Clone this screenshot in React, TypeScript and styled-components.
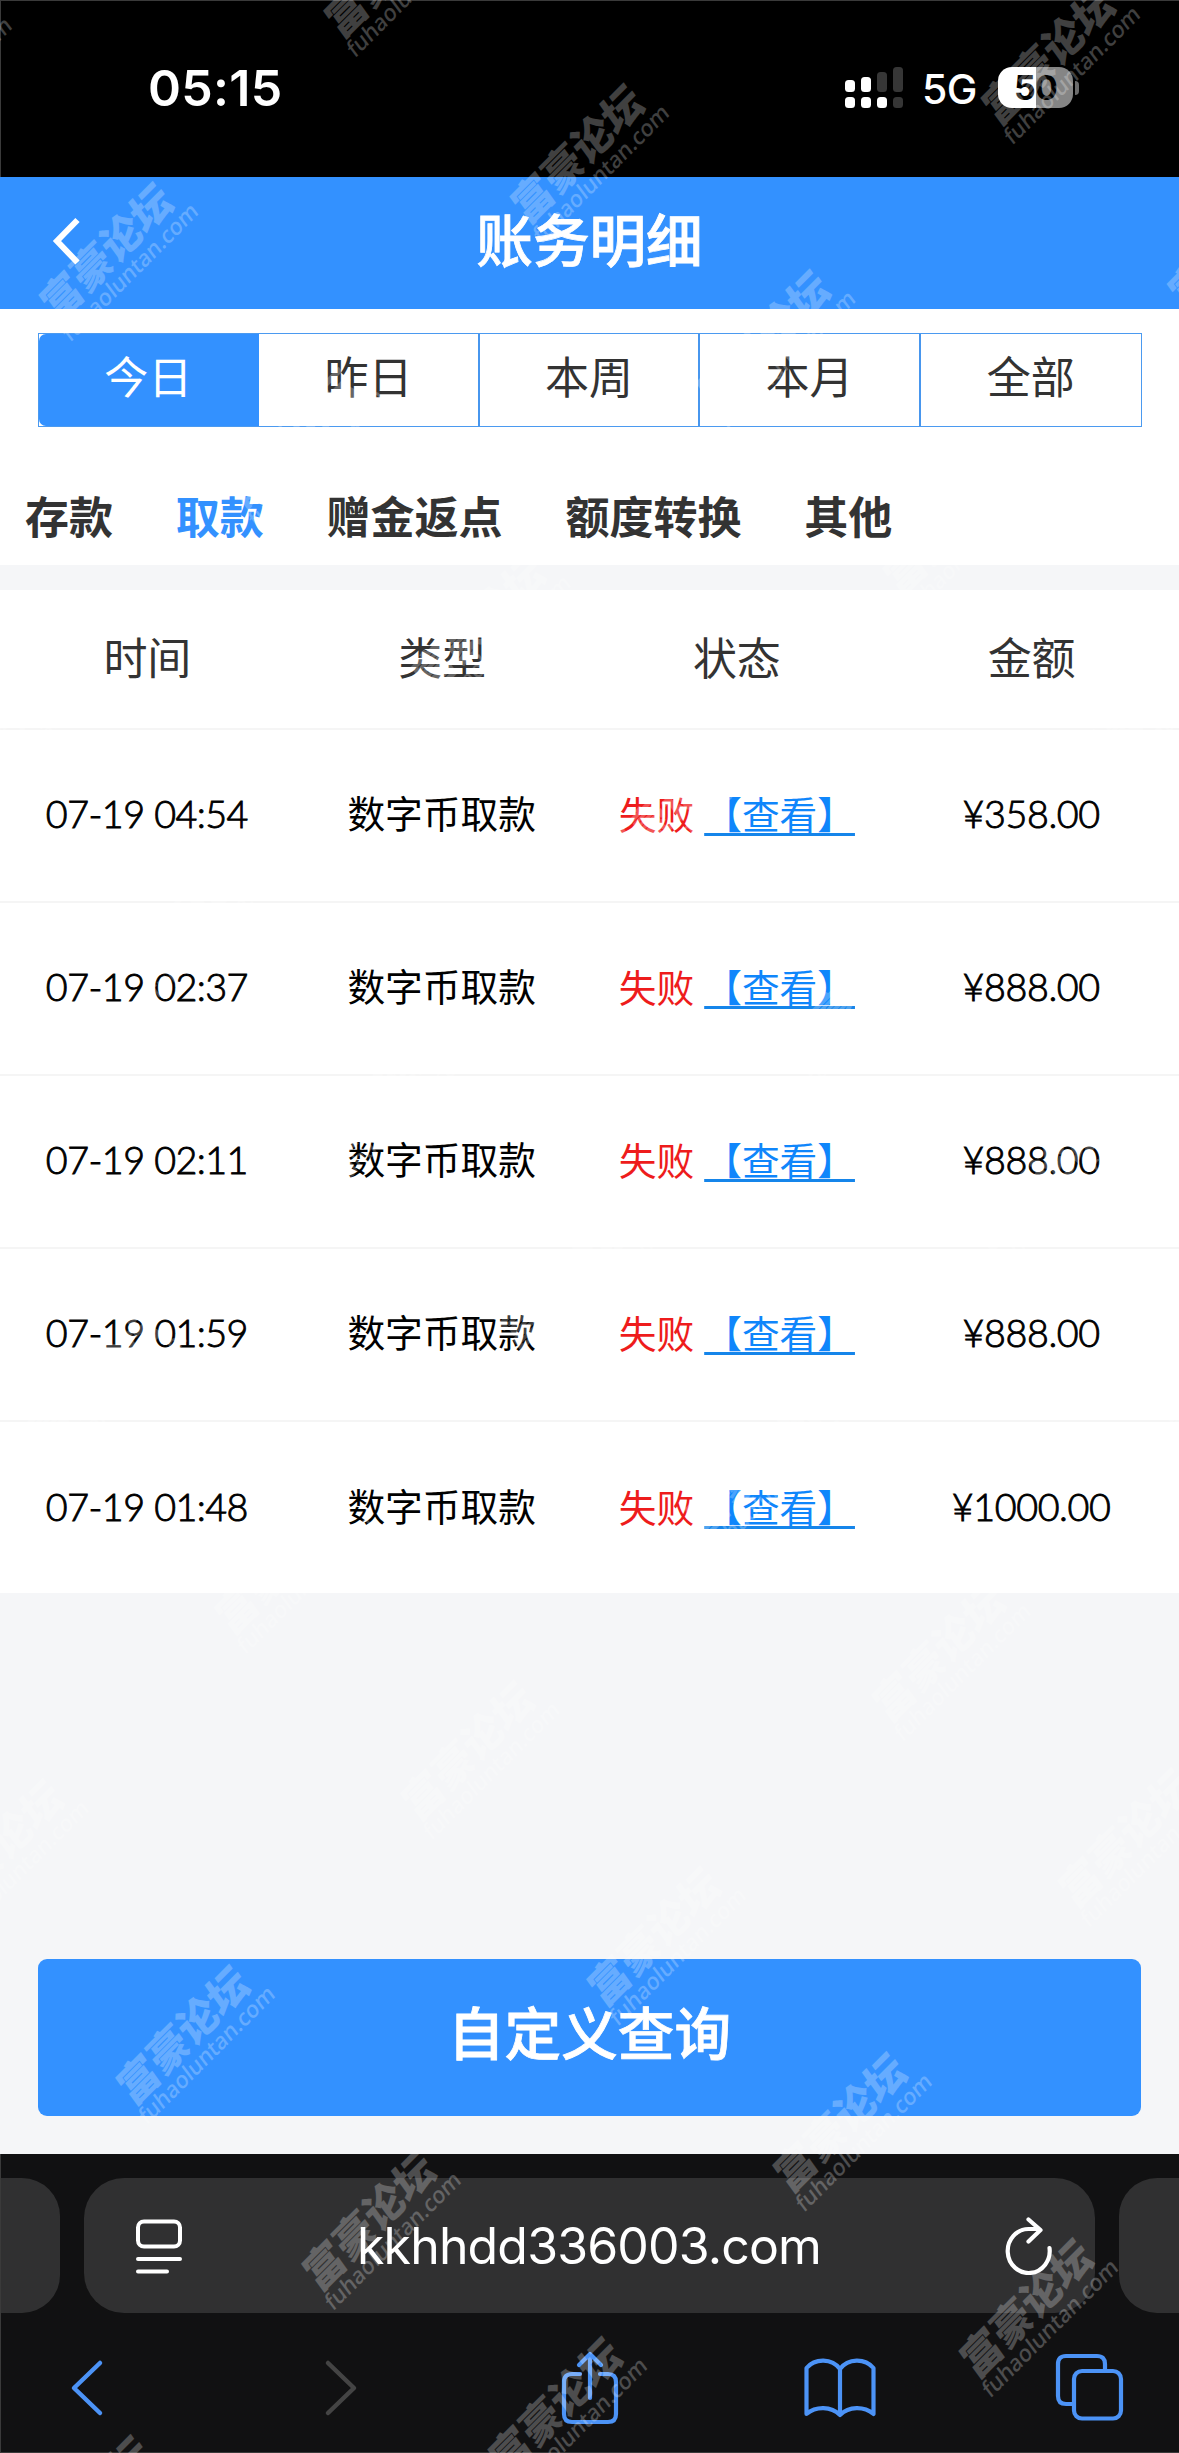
import React from "react";
import styled, { createGlobalStyle, css } from "styled-components";

const BLUE = "#3391ff";
const TINT = "#4c93f6";

const GlobalStyle = createGlobalStyle`
  * { box-sizing: border-box; }
  html, body { margin: 0; padding: 0; background: #f5f6f8; }
  body { font-family: "Noto Sans CJK SC", sans-serif; color: #333; }
  button { font: inherit; border: 0; background: none; padding: 0; margin: 0; color: inherit; }
`;

const Screen = styled.div`
  position: relative;
  display: flex;
  flex-direction: column;
  width: 1179px;
  height: 2453px;
  overflow: hidden;
  background: #f5f6f8;
`;

/* ---------- system status bar ---------- */

const StatusBar = styled.div`
  display: flex;
  justify-content: space-between;
  height: 177px;
  padding: 66px 100px 0 147px;
  background: #000;
  border-top: 1px solid #3a3a3a;
  border-left: 1px solid #3a3a3a;
  color: #fff;
  font-family: Inter, sans-serif;
`;

const Clock = styled.div`
  height: 42px;
  line-height: 42px;
  font-size: 50px;
  font-weight: 600;
  letter-spacing: 0.3px;
`;

const StatusIcons = styled.div`
  display: flex;
  align-items: center;
  height: 41px;
`;

const Network = styled.span`
  margin-left: 19px;
  width: 57px;
  line-height: 41px;
  padding-top: 4px;
  font-size: 41px;
  font-weight: 500;
  letter-spacing: -0.6px;
`;

const Battery = styled.div`
  display: flex;
  align-items: center;
  justify-content: center;
  margin-left: 19px;
  width: 75px;
  height: 41px;
  border-radius: 14px;
  background: linear-gradient(90deg, #fff 38px, #858585 38px);
  color: #000;
  font-size: 34px;
  font-weight: 700;
  letter-spacing: -0.8px;
`;

const BatteryCap = styled.div`
  margin-left: 2px;
  width: 4px;
  height: 14px;
  border-radius: 0 5px 5px 0;
  background: #6c6c6c;
`;

/* ---------- page header ---------- */

const Header = styled.header`
  display: grid;
  grid-template-columns: 140px 1fr 140px;
  align-items: center;
  height: 132px;
  background: ${BLUE};
  color: #fff;
`;

const BackButton = styled.button`
  display: flex;
  padding-left: 50px;
  padding-bottom: 4px;
`;

const Title = styled.h1`
  margin: 0;
  text-align: center;
  font-size: 56.6px;
  line-height: 80px;
  padding-bottom: 13px;
  font-weight: 500;
  -webkit-text-stroke: 0.8px #fff;
`;

/* ---------- filters ---------- */

const Filters = styled.section`
  height: 256px;
  padding: 24px 37px 0 38px;
  background: #fff;
`;

const Segments = styled.div`
  display: grid;
  grid-template-columns: repeat(5, 1fr);
  height: 94px;
  border: 1.5px solid #4b9af0;
`;

const Segment = styled.button<{ $active?: boolean }>`
  font-size: 44px;
  line-height: 80px;
  padding-bottom: 10px;
  font-weight: 400;
  color: #333;
  border-right: 2px solid #4796ee;
  &:last-child { border-right: 0; }
  ${(p) =>
    p.$active &&
    css`
      background: ${BLUE};
      border-color: ${BLUE};
      color: #fff;
      border-radius: 7px 0 0 7px;
    `}
`;

const Tabs = styled.nav`
  display: flex;
  gap: 62.8px;
  margin: 58px 0 0 -13px;
`;

const Tab = styled.button<{ $active?: boolean }>`
  flex: none;
  font-size: 44px;
  line-height: 60px;
  font-weight: 700;
  color: ${(p) => (p.$active ? BLUE : "#333")};
`;

/* ---------- records ---------- */

const Records = styled.section`
  margin-top: 25px;
  background: #fff;
`;

const Row = styled.div<{ $head?: boolean }>`
  display: grid;
  grid-template-columns: repeat(4, 1fr);
  align-items: center;
  height: ${(p) => (p.$head ? 140 : 173)}px;
  padding-bottom: 7px;
  border-bottom: 2px solid #f5f5f5;
  text-align: center;
  white-space: nowrap;
  font-size: ${(p) => (p.$head ? 44 : 37.7)}px;
  line-height: 60px;
  font-weight: 400;
  color: ${(p) => (p.$head ? "#333" : "#000")};
  &:last-child { border-bottom: 0; height: 171px; padding-bottom: 5px; }
`;

const Digits = styled.span<{ $spacing?: number }>`
  margin-left: -1px;
  padding-top: 3px;
  font-family: Lato, sans-serif;
  font-weight: 300;
  -webkit-text-stroke: 0.9px #000;
  letter-spacing: ${(p) => p.$spacing ?? -0.4}px;
`;

const Kind = styled.span`
  margin-left: -1px;
`;

const Status = styled.span`
  display: flex;
  justify-content: center;
  gap: 10px;
  padding-top: 2px;
  color: #ee1c1c;
  font-weight: 400;
`;

const ViewLink = styled.a`
  color: #0f86fb;
  text-decoration: underline;
  text-decoration-color: #1585ea;
  text-decoration-skip-ink: none;
  text-decoration-thickness: 3px;
  text-underline-offset: 4px;
`;

const Spacer = styled.div`
  flex: 1;
`;

const QueryButton = styled.button`
  flex: none;
  height: 157px;
  margin: 0 38px 38px;
  padding-bottom: 15px;
  border-radius: 9px;
  background: ${BLUE};
  color: #fff;
  font-size: 56.6px;
  font-weight: 500;
  -webkit-text-stroke: 0.8px #fff;
`;

/* ---------- browser toolbar ---------- */

const Browser = styled.footer`
  height: 299px;
  padding-top: 24px;
  background: #111112;
  border-left: 1px solid #3a3a3a;
  border-bottom: 1px solid #3a3a3a;
`;

const AddressRow = styled.div`
  display: grid;
  grid-template-columns: 59px 1011px 60px;
  column-gap: 24px;
  height: 135px;
`;

const Neighbor = styled.div<{ $side: "left" | "right" }>`
  background: #303031;
  border-radius: ${(p) => (p.$side === "left" ? "0 38px 38px 0" : "38px 0 0 38px")};
`;

const Address = styled.div`
  display: flex;
  align-items: center;
  justify-content: space-between;
  padding: 0 41px 0 50px;
  border-radius: 40px;
  background: #303031;
  color: #fff;
`;

const Host = styled.span`
  margin-right: 10px;
  font-family: Inter, sans-serif;
  font-size: 50px;
  line-height: 60px;
  letter-spacing: -0.85px;
`;

const Toolbar = styled.nav`
  display: grid;
  grid-template-columns: 170px 342px 153px 347px 153px;
  place-items: center;
  height: 110px;
  margin-top: 20px;
`;

const Icon = styled.svg`
  display: block;
  flex: none;
  fill: none;
  stroke-linecap: round;
  stroke-linejoin: round;
`;

const BackIcon = styled(Icon)`
  stroke: #fff;
  stroke-linecap: butt;
  stroke-linejoin: miter;
`;

/* ---------- watermark ---------- */

const MarkLayer = styled.div`
  position: absolute;
  inset: 0;
  overflow: hidden;
  pointer-events: none;
`;

const Mark = styled.div`
  position: absolute;
  transform-origin: 0 0;
  color: #fff;
  opacity: 0.25;
  white-space: nowrap;
`;

const MarkName = styled.div`
  font-size: 42px;
  line-height: 36px;
  height: 38px;
  font-weight: 900;
  transform: skewX(-9deg);
`;

const MarkSite = styled.div`
  margin: 1px 0 0 -5px;
  font-family: "Noto Sans", sans-serif;
  font-size: 22.3px;
  line-height: 24px;
  font-weight: 500;
  transform: skewX(-8deg);
`;

const marks: { x: number; y: number }[] = [];
for (let a = -2; a < 16; a++) {
  for (let b = -6; b < 5; b++) {
    const x = 32.5 + a * 186.2 + b * 471;
    const y = 297 + a * 185.9 - b * 98.5;
    if (x > -200 && x < 1180 && y > -40 && y < 2580) marks.push({ x, y });
  }
}

const periods = ["今日", "昨日", "本周", "本月", "全部"];
const tabs = ["存款", "取款", "赠金返点", "额度转换", "其他"];
const columns = ["时间", "类型", "状态", "金额"];
const records = [
  { time: "07-19 04:54", amount: "¥358.00" },
  { time: "07-19 02:37", amount: "¥888.00" },
  { time: "07-19 02:11", amount: "¥888.00" },
  { time: "07-19 01:59", amount: "¥888.00" },
  { time: "07-19 01:48", amount: "¥1000.00" },
];

const SignalIcon = () => (
  <Icon width="58" height="41" viewBox="0 0 58 41">
    <g fill="#fff">
      <rect x="0" y="13" width="10" height="12" rx="3.5" />
      <rect x="16" y="10" width="10" height="15" rx="3.5" />
      <rect x="0" y="30" width="10" height="11" rx="3.5" />
      <rect x="16" y="30" width="10" height="11" rx="3.5" />
      <rect x="32" y="30" width="10" height="11" rx="3.5" />
    </g>
    <g fill="#363636">
      <rect x="32" y="5" width="10" height="20" rx="3.5" />
      <rect x="48" y="0" width="10" height="25" rx="3.5" />
      <rect x="48" y="30" width="10" height="11" rx="3.5" />
    </g>
  </Icon>
);

export default function App() {
  return (
    <>
      <GlobalStyle />
      <Screen>
        <StatusBar>
          <Clock>05:15</Clock>
          <StatusIcons>
            <SignalIcon />
            <Network>5G</Network>
            <Battery>50</Battery>
            <BatteryCap />
          </StatusIcons>
        </StatusBar>

        <Header>
          <BackButton aria-label="返回">
            <BackIcon width="32" height="48" viewBox="0 0 32 48" strokeWidth="6">
              <path d="M27.500 3 7 24 27.500 45.500" />
            </BackIcon>
          </BackButton>
          <Title>账务明细</Title>
        </Header>

        <Filters>
          <Segments>
            {periods.map((p, i) => (
              <Segment key={p} $active={i === 0}>{p}</Segment>
            ))}
          </Segments>
          <Tabs>
            {tabs.map((t, i) => (
              <Tab key={t} $active={i === 1}>{t}</Tab>
            ))}
          </Tabs>
        </Filters>

        <Records>
          <Row $head>
            {columns.map((c) => (
              <span key={c}>{c}</span>
            ))}
          </Row>
          {records.map((r) => (
            <Row key={r.time}>
              <Digits $spacing={-0.55}>{r.time}</Digits>
              <Kind>数字币取款</Kind>
              <Status>
                失败<ViewLink>【查看】</ViewLink>
              </Status>
              <Digits>{r.amount}</Digits>
            </Row>
          ))}
        </Records>

        <Spacer />
        <QueryButton>自定义查询</QueryButton>

        <Browser>
          <AddressRow>
            <Neighbor $side="left" />
            <Address>
              <Icon width="50" height="58" viewBox="0 0 50 58" stroke="#fff" strokeWidth="4">
                <rect x="4" y="4.500" width="42" height="25" rx="6" />
                <path d="M4 42H46M4 54.500H33" />
              </Icon>
              <Host>kkhhdd336003.com</Host>
              <Icon width="50" height="58" viewBox="0 0 50 58" stroke="#fff" strokeWidth="4.200">
                <path d="M45.500 31A21 22 0 1 1 24.500 12H34M24.500 2.500 36.500 13 24.500 24.500" />
              </Icon>
            </Address>
            <Neighbor $side="right" />
          </AddressRow>
          <Toolbar>
            <Icon width="36" height="58" viewBox="0 0 36 58" stroke={TINT} strokeWidth="4.500">
              <path d="M32 4 6 29 32 54" />
            </Icon>
            <Icon width="36" height="58" viewBox="0 0 36 58" stroke="#444" strokeWidth="4.500">
              <path d="M4 4 30 29 4 54" />
            </Icon>
            <Icon width="60" height="74" viewBox="0 0 60 74" stroke={TINT} strokeWidth="4.200">
              <path d="M20 23H12Q4 23 4 31V63Q4 71 12 71H48Q56 71 56 63V31Q56 23 48 23H40M30 47V3M19 14 30 3 41 14" />
            </Icon>
            <Icon width="74" height="62" viewBox="0 0 74 62" stroke={TINT} strokeWidth="4.200">
              <path d="M37 12C29 1 12 1 3.500 11V57C13 49 28 49 37 58C46 49 61 49 70.500 57V11C62 1 45 1 37 12V58" />
            </Icon>
            <Icon width="72" height="70" viewBox="0 0 72 70" stroke={TINT} strokeWidth="4.200">
              <rect x="20" y="18" width="47" height="47.500" rx="8" />
              <path d="M51 18V11Q51 3 43 3H12Q4 3 4 11V43Q4 51 12 51H20" />
            </Icon>
          </Toolbar>
        </Browser>

        <MarkLayer aria-hidden>
          {marks.map((m) => (
            <Mark key={`${m.x},${m.y}`} style={{ transform: `translate(${m.x}px, ${m.y}px) rotate(-45deg)` }}>
              <MarkName>富豪论坛</MarkName>
              <MarkSite>fuhaoluntan.com</MarkSite>
            </Mark>
          ))}
        </MarkLayer>
      </Screen>
    </>
  );
}
